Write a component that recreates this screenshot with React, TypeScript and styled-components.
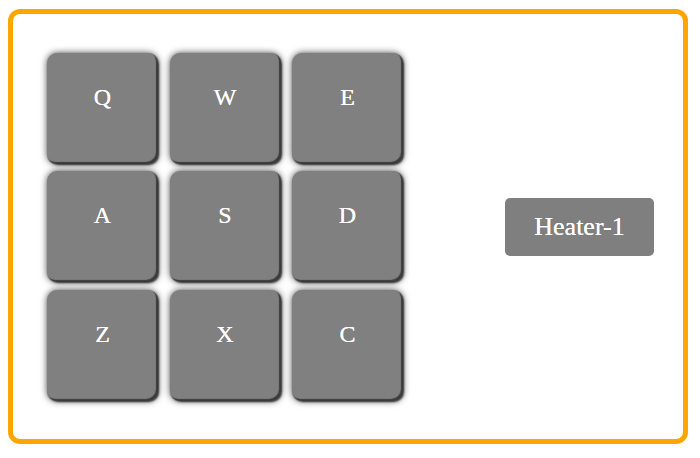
import styled, { createGlobalStyle } from 'styled-components';

const GlobalStyle = createGlobalStyle`
    body {
        margin: 8px;
        background: #ffffff;
        font-family: "Liberation Serif", "Times New Roman", serif;
    }
`;

const KEYS = ['Q', 'W', 'E', 'A', 'S', 'D', 'Z', 'X', 'C'];

export default function App(): JSX.Element {
    return (
        <>
            <GlobalStyle />
            <Panel>
                <KeyGrid>
                    {KEYS.map((k) => (
                        <Key key={k}>{k}</Key>
                    ))}
                </KeyGrid>
                <Device>Heater-1</Device>
            </Panel>
        </>
    );
}

const Panel = styled.div`
    box-sizing: border-box;
    width: 680px;
    height: 435px;
    margin-top: 1px;
    border: 5px solid #ffa500;
    border-radius: 12px;
    display: flex;
    align-items: center;
    justify-content: space-between;
    padding: 0 29px 0 34px;
`;

const KeyGrid = styled.div`
    display: grid;
    grid-template-columns: repeat(3, 111px);
    grid-auto-rows: 111px;
    column-gap: 11.5px;
    row-gap: 7.5px;
`;

const Key = styled.div`
    box-sizing: border-box;
    background: #808080;
    border-radius: 10px;
    color: #ffffff;
    font-size: 24px;
    text-align: center;
    padding-top: 31px;
    text-shadow: 0 0 0.4px #ffffff;
    box-shadow: inset -2px -2px 1px rgba(0, 0, 0, 0.55),
        1px 1px 2px rgba(0, 0, 0, 0.7),
        0 0 7px rgba(0, 0, 0, 0.7);
`;

const Device = styled.div`
    box-sizing: border-box;
    width: 149px;
    height: 58px;
    background: #7f7f7f;
    border-radius: 5px;
    color: #ffffff;
    font-size: 26px;
    text-shadow: 0 0 0.4px #ffffff;
    display: flex;
    align-items: center;
    justify-content: center;
`;
